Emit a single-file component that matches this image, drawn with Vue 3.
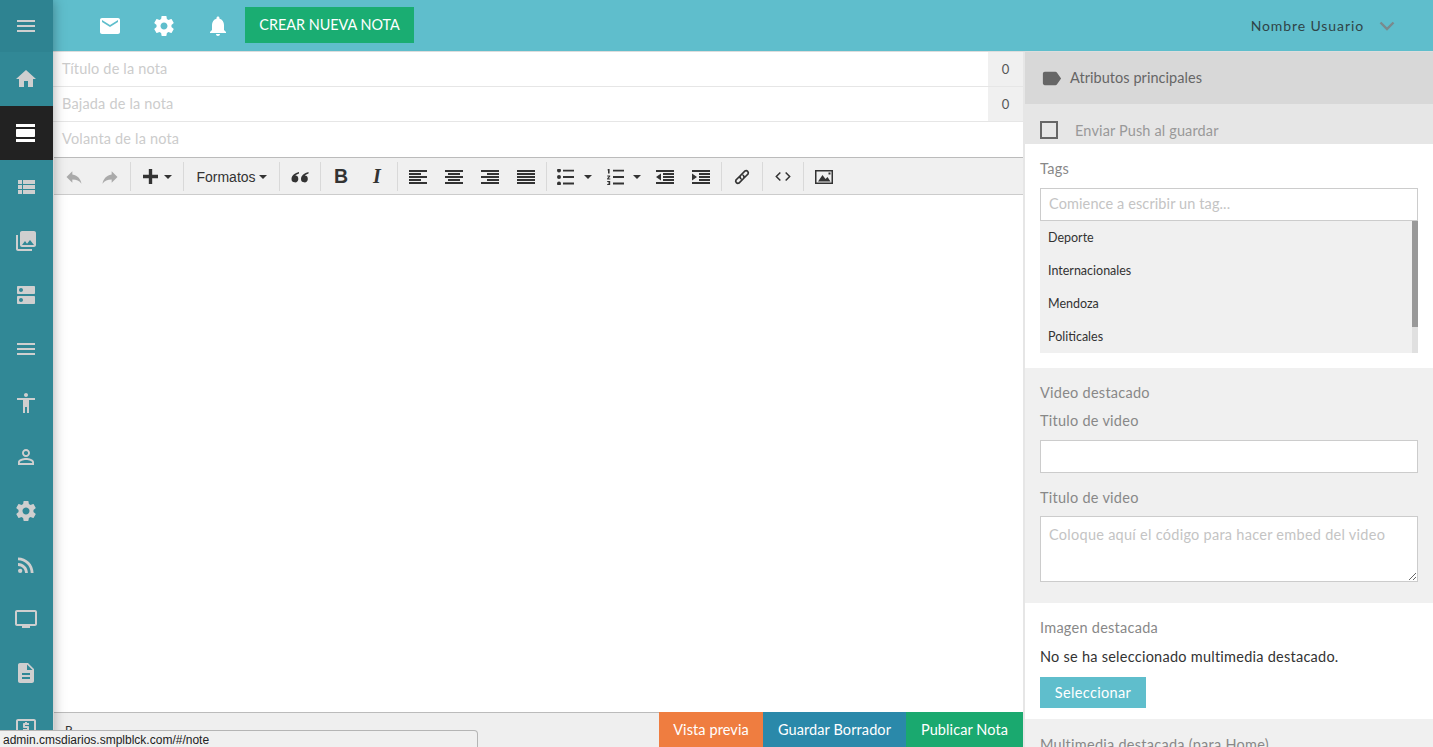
<template>
  <div class="page">
    <aside class="sidebar">
      <a
        v-for="item in sideItems"
        :key="item.name"
        class="side-item"
        :class="{ active: item.active, first: item.first }"
      >
        <svg viewBox="0 0 24 24" width="24" height="24"><path :d="item.d" /></svg>
      </a>
    </aside>

    <div class="content">
      <header class="topbar">
        <div class="top-icons">
          <svg viewBox="0 0 24 24" width="24" height="24"><path :d="icons.email" /></svg>
          <svg viewBox="0 0 24 24" width="24" height="24"><path :d="icons.settings" /></svg>
          <svg viewBox="0 0 24 24" width="24" height="24"><path :d="icons.bell" /></svg>
        </div>
        <button class="new-note">CREAR NUEVA NOTA</button>
        <div class="user">
          <span>Nombre Usuario</span>
          <svg viewBox="0 0 16 10" width="16" height="10"><path d="M1.5 1.5 8 8l6.5-6.5" /></svg>
        </div>
      </header>

      <div class="workspace">
        <main class="editor">
          <div class="field">
            <span class="field-text">Título de la nota</span>
            <span class="counter">0</span>
          </div>
          <div class="field">
            <span class="field-text">Bajada de la nota</span>
            <span class="counter">0</span>
          </div>
          <div class="field last">
            <span class="field-text">Volanta de la nota</span>
          </div>

          <div class="toolbar">
            <div v-for="(group, i) in toolGroups" :key="i" class="tool-group">
              <div
                v-for="tool in group"
                :key="tool.name"
                class="tool"
                :class="tool.cls"
              >
                <span v-if="tool.label" class="tool-label">{{ tool.label }}</span>
                <svg
                  v-if="tool.d"
                  :viewBox="tool.box || '0 0 18 16'"
                  :width="tool.w || 18"
                  :height="tool.h || 16"
                  :class="{ flip: tool.flip }"
                >
                  <path :d="tool.d" />
                </svg>
                <i v-if="tool.caret" class="caret"></i>
              </div>
            </div>
          </div>

          <div class="editor-body"></div>

          <div class="editor-foot">
            <span class="path">P</span>
            <div class="actions">
              <button class="orange">Vista previa</button>
              <button class="blue">Guardar Borrador</button>
              <button class="green">Publicar Nota</button>
            </div>
          </div>
        </main>

        <section class="panel">
          <div class="panel-head">
            <svg viewBox="0 0 24 24" width="23" height="23"><path :d="icons.label" /></svg>
            <span>Atributos principales</span>
          </div>
          <div class="push">
            <i class="check"></i>
            <span>Enviar Push al guardar</span>
          </div>

          <div class="tags">
            <label>Tags</label>
            <input type="text" placeholder="Comience a escribir un tag..." />
            <div class="tag-list">
              <div v-for="tag in tags" :key="tag" class="tag">{{ tag }}</div>
              <div class="scroll"><div class="thumb"></div></div>
            </div>
          </div>

          <div class="video">
            <label class="video-title">Video destacado</label>
            <label>Titulo de video</label>
            <input type="text" />
            <label class="second">Titulo de video</label>
            <textarea placeholder="Coloque aquí el código para hacer embed del video"></textarea>
          </div>

          <div class="image">
            <label>Imagen destacada</label>
            <p>No se ha seleccionado multimedia destacado.</p>
            <button>Seleccionar</button>
          </div>

          <div class="home-media">
            <label>Multimedia destacada (para Home)</label>
          </div>
        </section>
      </div>
    </div>

    <div class="status-url">admin.cmsdiarios.smplblck.com/#/note</div>
  </div>
</template>

<script setup>
const icons = {
  menu: 'M3 18h18v-2H3v2zm0-5h18v-2H3v2zm0-7v2h18V6H3z',
  home: 'M10 20v-6h4v6h5v-8h3L12 3 2 12h3v8z',
  day: 'M2 21h19v-3H2v3zM20 8H3c-.55 0-1 .45-1 1v6c0 .55.45 1 1 1h17c.55 0 1-.45 1-1V9c0-.55-.45-1-1-1zM2 3v3h19V3H2z',
  list: 'M4 14h4v-4H4v4zm0 5h4v-4H4v4zM4 9h4V5H4v4zm5 5h12v-4H9v4zm0 5h12v-4H9v4zM9 5v4h12V5H9z',
  photos: 'M22 16V4c0-1.1-.9-2-2-2H8c-1.1 0-2 .9-2 2v12c0 1.1.9 2 2 2h12c1.1 0 2-.9 2-2zm-11-4l2.03 2.71L16 11l4 5H8l3-4zM2 6v14c0 1.1.9 2 2 2h14v-2H4V6H2z',
  dns: 'M20 13H4c-.55 0-1 .45-1 1v6c0 .55.45 1 1 1h16c.55 0 1-.45 1-1v-6c0-.55-.45-1-1-1zM7 19c-1.1 0-2-.9-2-2s.9-2 2-2 2 .9 2 2-.9 2-2 2zM20 3H4c-.55 0-1 .45-1 1v6c0 .55.45 1 1 1h16c.55 0 1-.45 1-1V4c0-.55-.45-1-1-1zM7 9c-1.1 0-2-.9-2-2s.9-2 2-2 2 .9 2 2-.9 2-2 2z',
  person: 'M12 5.9c1.16 0 2.1.94 2.1 2.1s-.94 2.1-2.1 2.1S9.9 9.16 9.9 8s.94-2.1 2.1-2.1m0 9c2.97 0 6.1 1.46 6.1 2.1v1.1H5.9V17c0-.64 3.13-2.1 6.1-2.1M12 4C9.79 4 8 5.79 8 8s1.79 4 4 4 4-1.79 4-4-1.79-4-4-4zm0 9c-2.67 0-8 1.34-8 4v3h16v-3c0-2.66-5.33-4-8-4z',
  accessibility: 'M12 2c1.1 0 2 .9 2 2s-.9 2-2 2-2-.9-2-2 .9-2 2-2zm9 7h-6v13h-2v-6h-2v6H9V9H3V7h18v2z',
  settings: 'M19.43 12.98c.04-.32.07-.64.07-.98s-.03-.66-.07-.98l2.11-1.65c.19-.15.24-.42.12-.64l-2-3.46c-.12-.22-.39-.3-.61-.22l-2.49 1c-.52-.4-1.08-.73-1.69-.98l-.38-2.65C14.46 2.18 14.25 2 14 2h-4c-.25 0-.46.18-.49.42l-.38 2.65c-.61.25-1.17.59-1.69.98l-2.49-1c-.23-.09-.49 0-.61.22l-2 3.46c-.13.22-.07.49.12.64l2.11 1.65c-.04.32-.07.65-.07.98s.03.66.07.98l-2.11 1.65c-.19.15-.24.42-.12.64l2 3.46c.12.22.39.3.61.22l2.49-1c.52.4 1.08.73 1.69.98l.38 2.65c.03.24.24.42.49.42h4c.25 0 .46-.18.49-.42l.38-2.65c.61-.25 1.17-.59 1.69-.98l2.49 1c.23.09.49 0 .61-.22l2-3.46c.12-.22.07-.49-.12-.64l-2.11-1.65zM12 15.5c-1.93 0-3.5-1.57-3.5-3.5s1.57-3.5 3.5-3.5 3.5 1.57 3.5 3.5-1.57 3.5-3.5 3.5z',
  rss: 'M6.18 15.64a2.18 2.18 0 1 0 0 4.36 2.18 2.18 0 0 0 0-4.36zM4 4.44v2.83c7.03 0 12.73 5.7 12.73 12.73h2.83c0-8.59-6.97-15.56-15.56-15.56zm0 5.66v2.83c3.9 0 7.07 3.17 7.07 7.07h2.83c0-5.47-4.43-9.9-9.9-9.9z',
  tv: 'M21 3H3c-1.1 0-2 .9-2 2v12c0 1.1.9 2 2 2h5v2h8v-2h5c1.1 0 2-.9 2-2V5c0-1.1-.9-2-2-2zm0 14H3V5h18v12z',
  doc: 'M14 2H6c-1.1 0-1.99.9-1.99 2L4 20c0 1.1.89 2 1.99 2H18c1.1 0 2-.9 2-2V8l-6-6zm2 16H8v-2h8v2zm0-4H8v-2h8v2zm-3-5V3.5L18.5 9H13z',
  atm: 'M11 17h2v-1h1c.55 0 1-.45 1-1v-3c0-.55-.45-1-1-1h-3v-1h4V8h-2V7h-2v1h-1c-.55 0-1 .45-1 1v3c0 .55.45 1 1 1h3v1H9v2h2v1zm9-13H4c-1.11 0-1.99.89-1.99 2L2 18c0 1.11.89 2 2 2h16c1.11 0 2-.89 2-2V6c0-1.11-.89-2-2-2zm0 14H4V6h16v12z',
  email: 'M20 4H4c-1.1 0-1.99.9-1.99 2L2 18c0 1.1.9 2 2 2h16c1.1 0 2-.9 2-2V6c0-1.1-.9-2-2-2zm0 4l-8 5-8-5V6l8 5 8-5v2z',
  bell: 'M12 22c1.1 0 2-.9 2-2h-4c0 1.1.89 2 2 2zm6-6v-5c0-3.07-1.64-5.64-4.5-6.32V4c0-.83-.67-1.5-1.5-1.5s-1.5.67-1.5 1.5v.68C7.63 5.36 6 7.92 6 11v5l-2 2v1h16v-1l-2-2z',
  label: 'M17.63 5.84C17.27 5.33 16.67 5 16 5L5 5.01C3.9 5.01 3 5.9 3 7v10c0 1.1.9 1.99 2 1.99L16 19c.67 0 1.27-.33 1.63-.84L22 12l-4.37-6.16z',
}

const sideItems = [
  { name: 'menu', d: icons.menu, first: true },
  { name: 'home', d: icons.home },
  { name: 'notes', d: icons.day, active: true },
  { name: 'list', d: icons.list },
  { name: 'photos', d: icons.photos },
  { name: 'dns', d: icons.dns },
  { name: 'sections', d: icons.menu },
  { name: 'access', d: icons.accessibility },
  { name: 'person', d: icons.person },
  { name: 'settings', d: icons.settings },
  { name: 'rss', d: icons.rss },
  { name: 'tv', d: icons.tv },
  { name: 'doc', d: icons.doc },
  { name: 'money', d: icons.atm },
]

// five rows of lines, x offset and width per row
const lines = rows =>
  rows.map(([x, w], i) => `M${x} ${i * 3 + 1}h${w}v2H${x}z`).join('')

const toolGroups = [
  [
    { name: 'undo', cls: 'w36 muted', d: 'M10 9V5l-7 7 7 7v-4.1c5 0 8.5 1.6 11 5.1-1-5-4-10-11-11z', box: '0 0 24 24', w: 20, h: 20 },
    { name: 'redo', cls: 'w36 muted', d: 'M10 9V5l-7 7 7 7v-4.1c5 0 8.5 1.6 11 5.1-1-5-4-10-11-11z', box: '0 0 24 24', w: 20, h: 20, flip: true },
  ],
  [{ name: 'insert', cls: 'plus', d: 'M6.2 0h3.6v6.2H16v3.6H9.8V16H6.2V9.8H0V6.2h6.2z', box: '0 0 16 16', w: 15, h: 15, caret: true }],
  [{ name: 'formats', cls: 'formats', label: 'Formatos', caret: true }],
  [{ name: 'quote', cls: 'w36', d: 'M8 3C4 3.800 .5 6.500 .5 10a3.400 3.400 0 1 0 3.800-3.400C4.900 5.800 6.500 5 8 4.500zM17.500 3c-4 .8-7.500 3.500-7.500 7a3.400 3.400 0 1 0 3.800-3.400c.6-.8 2.200-1.600 3.700-2.100z' }],
  [
    { name: 'bold', cls: 'w36 bold', label: 'B' },
    { name: 'italic', cls: 'w36 italic', label: 'I' },
  ],
  [
    { name: 'left', cls: 'w36', d: lines([[0, 18], [0, 12], [0, 18], [0, 12], [0, 18]]) },
    { name: 'center', cls: 'w36', d: lines([[0, 18], [3, 12], [0, 18], [3, 12], [0, 18]]) },
    { name: 'right', cls: 'w36', d: lines([[0, 18], [6, 12], [0, 18], [6, 12], [0, 18]]) },
    { name: 'justify', cls: 'w36', d: lines([[0, 18], [0, 18], [0, 18], [0, 18], [0, 18]]) },
  ],
  [
    { name: 'bullets', cls: 'w48', d: 'M0 1.5a2 2 0 1 1 4 0 2 2 0 0 1-4 0zM0 8a2 2 0 1 1 4 0 2 2 0 0 1-4 0zM0 14.5a2 2 0 1 1 4 0 2 2 0 0 1-4 0zM6 .7h11v1.800H6zM6 7.100h11v1.800H6zM6 13.600h11v1.800H6z', caret: true },
    { name: 'numbers', cls: 'w50', d: 'M1 0h1.600v4.500H1V1.200H.2zM.2 6.400h3v1.200L1.600 9.500h1.700v1H.1v-1L1.800 7.400H.2zM.2 12h3v4h-3v-1h1.800v-.6H.9v-.9h1.100V13H.2zM6 .7h11v1.800H6zM6 7.100h11v1.800H6zM6 13.600h11v1.800H6z', caret: true },
    { name: 'outdent', cls: 'w36', d: 'M0 1h18v2H0zM7 4h11v2H7zM7 7h11v2H7zM7 10h11v2H7zM0 13h18v2H0zM5 4.500v7L0 8z' },
    { name: 'indent', cls: 'w36', d: 'M0 1h18v2H0zM7 4h11v2H7zM7 7h11v2H7zM7 10h11v2H7zM0 13h18v2H0zM0 4.500v7L5 8z' },
  ],
  [{ name: 'link', cls: 'w36 link', d: 'M7.500 7.500 3 12a2.200 2.200 0 0 0 3 3l4.500-4.500a2.200 2.200 0 0 0-1-3.500M10.500 10.500 15 6a2.200 2.200 0 0 0-3-3L7.500 7.500a2.200 2.200 0 0 0 1 3.500', box: '0 0 18 18', h: 18 }],
  [{ name: 'code', cls: 'w36 code', d: 'M6 3 1.500 7.500 6 12M12 3l4.500 4.500L12 12', box: '0 0 18 15', h: 15, w: 16 }],
  [{ name: 'image', cls: 'w36', d: 'M0 1h18v14H0zM1.500 2.500v11h15v-11zM3 12.500l4.500-6.500 3 4 2-2 3 4.500zM13.500 3.500h2v2h-2z', box: '0 0 18 16' }],
]

const tags = ['Deporte', 'Internacionales', 'Mendoza', 'Politicales']
</script>

<style>
html,
body {
  margin: 0;
  height: 100%;
  overflow: hidden;
}
</style>

<style scoped>
.page {
  display: flex;
  height: 100vh;
  overflow: hidden;
  position: relative;
  font-family: Lato, "Open Sans", sans-serif;
  font-size: 14px;
  color: #333;
  background: #fff;
}

/* sidebar */
.sidebar {
  width: 53px;
  flex: none;
  box-sizing: border-box;
  background: #318896;
  box-shadow: 0 0 12px rgba(0, 0, 0, 0.35);
  position: relative;
  z-index: 2;
  overflow: hidden;
}

.side-item {
  display: flex;
  align-items: center;
  justify-content: center;
  height: 54px;
  padding-right: 1px;
  fill: #cfcfcf;
}

.side-item.first {
  height: 52px;
  background: #2e8391;
}

.side-item.active {
  background: #222;
  fill: #fff;
}

/* top bar */
.content {
  flex: 1;
  min-width: 0;
  display: flex;
  flex-direction: column;
}

.topbar {
  height: 51px;
  flex: none;
  background: #5fbecc;
  display: flex;
  align-items: center;
  box-sizing: border-box;
  padding: 0 38px 0 45px;
}

.top-icons {
  display: flex;
  gap: 30px;
  fill: #fff;
}

.new-note {
  margin-left: 15px;
  width: 169px;
  height: 36px;
  margin-top: -1px;
  padding-bottom: 2px;
  border: 0;
  background: #1aad72;
  color: #fff;
  font: inherit;
  font-size: 14.4px;
}

.user {
  margin-left: auto;
  display: flex;
  align-items: center;
  gap: 15px;
  color: #2f4447;
  letter-spacing: 0.9px;
}

.user svg {
  fill: none;
  stroke: #7a8a8d;
  stroke-width: 2.4;
}

/* left column */
.workspace {
  flex: 1;
  min-height: 0;
  display: flex;
  border-top: 1px solid #ddd;
}

.editor {
  width: 970px;
  flex: none;
  display: flex;
  flex-direction: column;
}

.field {
  height: 35px;
  flex: none;
  box-sizing: border-box;
  display: flex;
  align-items: stretch;
  justify-content: space-between;
  border-bottom: 1px solid #e6e6e6;
  padding-left: 9px;
}

.field.last {
  border-bottom: 0;
}

.field-text {
  color: #ccc;
  font-size: 14.5px;
  line-height: 34px;
  letter-spacing: 0.17px;
}

.counter {
  width: 35px;
  display: flex;
  align-items: center;
  justify-content: center;
  padding-bottom: 1px;
  box-sizing: border-box;
  background: #f0f0f0;
  color: #555;
  font-size: 13px;
}

.toolbar {
  height: 38px;
  flex: none;
  box-sizing: border-box;
  display: flex;
  align-items: center;
  padding-top: 1px;
  background: #f0f0f0;
  border-top: 1px solid #bbb;
  border-bottom: 1px solid #ccc;
  margin-left: 1px;
}

.tool-group {
  display: flex;
  height: 29px;
  padding: 0 2px;
  border-right: 1px solid #d9d9d9;
}

.tool-group:nth-child(2) {
  padding: 0;
}

.tool-group:last-child {
  border-right: 0;
}

.tool {
  display: flex;
  align-items: center;
  justify-content: center;
  fill: #333;
  color: #333;
}

.w36 { width: 36px; }
.w48 { width: 48px; gap: 9px; justify-content: flex-start; padding-left: 8px; box-sizing: border-box; }
.w50 { width: 50px; gap: 8px; justify-content: flex-start; padding-left: 10px; box-sizing: border-box; }
.plus { width: 52px; gap: 6px; }
.formats { width: 91px; gap: 3px; }
.muted { fill: #aaa; }
.flip { transform: scaleX(-1); }

.tool-label {
  font-family: "Liberation Sans", sans-serif;
  font-size: 14px;
}

.bold .tool-label {
  font-weight: 700;
  font-size: 19.5px;
}

.italic .tool-label {
  font-family: "Liberation Serif", serif;
  font-style: italic;
  font-weight: 700;
  font-size: 20px;
}

.link svg,
.code svg {
  fill: none;
  stroke: #333;
  stroke-width: 1.7;
}

.caret {
  width: 0;
  height: 0;
  border-left: 4px solid transparent;
  border-right: 4px solid transparent;
  border-top: 4px solid #333;
}

.editor-body {
  flex: 1;
  margin-left: 1px;
  background: #fff;
}

.editor-foot {
  height: 35px;
  flex: none;
  display: flex;
  justify-content: space-between;
  background: #efefef;
  border-top: 1px solid #bbb;
  box-sizing: border-box;
  margin-left: 1px;
}

.path {
  margin-left: 11px;
  margin-top: 9px;
  font-size: 12px;
  color: #333;
}

.actions {
  display: flex;
  margin-top: -1px;
}

.actions button {
  height: 35px;
  border: 0;
  color: #fff;
  font: inherit;
  font-size: 14.5px;
  letter-spacing: 0.1px;
  padding: 0;
}

.orange { width: 104px; background: #ef7d40; }
.blue { width: 143px; background: #2a89aa; }
.green { width: 117px; background: #1aa96f; }

/* right column */
.panel {
  flex: 1;
  min-width: 0;
  border-left: 2px solid #e6e6e6;
  overflow: hidden;
  color: #888;
}

.panel-head {
  height: 52px;
  display: flex;
  align-items: center;
  background: #d8d8d8;
  padding: 0 0 2px 15px;
  box-sizing: border-box;
  gap: 7px;
  color: #666;
  font-size: 14.5px;
  letter-spacing: 0.05px;
}

.panel-head svg {
  fill: #666;
  margin-top: 2px;
}

.push {
  height: 40px;
  box-sizing: border-box;
  padding: 17px 0 0 15px;
  display: flex;
  gap: 17px;
  background: #e6e6e6;
  color: #999;
  font-size: 14.5px;
  line-height: 20px;
  letter-spacing: 0.14px;
}

.check {
  width: 18px;
  height: 18px;
  box-sizing: border-box;
  border: 2px solid #666;
  flex: none;
}

label {
  display: block;
  line-height: 18px;
  font-size: 14.5px;
  color: #888;
  letter-spacing: 0.26px;
}

input,
textarea {
  display: block;
  width: 378px;
  box-sizing: border-box;
  border: 1px solid #ccc;
  background: #fff;
  padding: 0 8px;
  margin: 0;
  font: inherit;
  font-size: 14.5px;
  outline: 0;
}

input {
  height: 33px;
  padding-bottom: 2px;
  letter-spacing: 0.11px;
}

input::placeholder,
textarea::placeholder {
  color: #c4c4c4;
  opacity: 1;
}

.tags {
  height: 224px;
  box-sizing: border-box;
  padding: 16px 15px 0;
  background: #fff;
}

.tags label {
  margin-bottom: 10px;
}

.tag-list {
  position: relative;
  width: 378px;
  height: 132px;
  background: #f0f0f0;
  overflow: hidden;
}

.tag {
  height: 33px;
  line-height: 33px;
  padding-left: 8px;
  font-size: 12.5px;
  color: #333;
}

.scroll {
  position: absolute;
  top: 0;
  right: 0;
  bottom: 0;
  width: 6px;
  background: #e0e0e0;
}

.thumb {
  height: 106px;
  background: #999;
}

.video {
  height: 235px;
  box-sizing: border-box;
  padding: 16px 15px 0;
  background: #f0f0f0;
}

.video-title {
  margin-bottom: 10px;
}

.video input {
  margin-top: 10px;
}

.video .second {
  margin-top: 16px;
}

textarea {
  height: 66px;
  margin-top: 9px;
  padding-top: 8px;
  line-height: 20px;
  letter-spacing: 0.27px;
}

.image {
  height: 116px;
  box-sizing: border-box;
  padding: 16px 15px 0;
  background: #fff;
}

.image p {
  margin: 11px 0 0;
  line-height: 18px;
  color: #333;
  font-size: 14.5px;
  letter-spacing: 0.25px;
}

.image button {
  display: block;
  margin-top: 11px;
  width: 106px;
  height: 31px;
  border: 0;
  background: #5fbecc;
  color: #fff;
  font: inherit;
  font-size: 14.5px;
  letter-spacing: 0.35px;
}

.home-media {
  padding: 17px 15px;
  background: #f0f0f0;
  min-height: 60px;
}

.status-url {
  position: absolute;
  left: 0;
  bottom: -3px;
  width: 478px;
  height: 20px;
  box-sizing: border-box;
  padding: 1px 0 0 3px;
  background: #f0f0f0;
  border: 1px solid #b5b5b5;
  border-left: 0;
  border-top-right-radius: 4px;
  font-family: "Liberation Sans", sans-serif;
  font-size: 12px;
  line-height: 16px;
  color: #222;
  z-index: 5;
}
</style>
